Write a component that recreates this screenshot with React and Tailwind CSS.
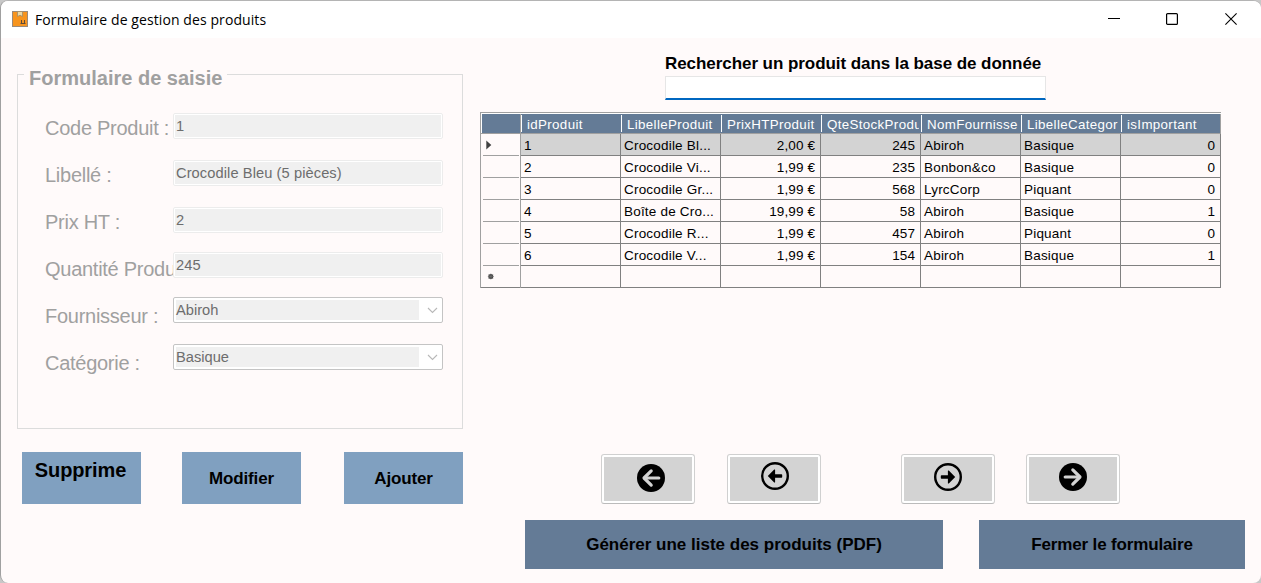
const fields = [
  { value: "1", gap: "mt-0" },
  { value: "Crocodile Bleu (5 pièces)", gap: "mt-[21px]" },
  { value: "2", gap: "mt-[21px]" },
  { value: "245", gap: "mt-[19px]" },
];

const labels = [
  "Code Produit :",
  "Libellé :",
  "Prix HT :",
  "Quantité Produ",
  "Fournisseur :",
  "Catégorie :",
];

const columns = [
  "idProduit",
  "LibelleProduit",
  "PrixHTProduit",
  "QteStockProdu",
  "NomFournisse",
  "LibelleCategor",
  "isImportant",
];

const rows = [
  ["1", "Crocodile Bl...", "2,00 €", "245", "Abiroh", "Basique", "0"],
  ["2", "Crocodile Vi...", "1,99 €", "235", "Bonbon&co", "Basique", "0"],
  ["3", "Crocodile Gr...", "1,99 €", "568", "LyrcCorp", "Piquant", "0"],
  ["4", "Boîte de Cro...", "19,99 €", "58", "Abiroh", "Basique", "1"],
  ["5", "Crocodile R...", "1,99 €", "457", "Abiroh", "Piquant", "0"],
  ["6", "Crocodile V...", "1,99 €", "154", "Abiroh", "Basique", "1"],
  ["", "", "", "", "", "", ""],
];

const rightAligned = [2, 3, 6];

function TitleBar() {
  return (
    <header className="flex h-[37px] shrink-0 items-center bg-white pl-[11px]">
      <svg width="16" height="16" viewBox="0 0 16 16" className="-mt-[1px] shrink-0">
        <rect x="0.5" y="0.5" width="15" height="15" fill="#f7941d" stroke="#9a8a7a" />
        <path d="M5.5 0.5h5v5l-2.5-1.2-2.5 1.2z" fill="#ecd9a5" stroke="#a08a68" strokeWidth="0.8" />
        <path d="M9.5 9v3M12.5 9v3M8.5 12.5h5" stroke="#5d4a38" fill="none" />
      </svg>
      <h1 className="ml-[7px] flex-1 whitespace-nowrap font-['Open_Sans',sans-serif] text-[14px] tracking-[0.09px] text-black">
        Formulaire de gestion des produits
      </h1>
      <div className="mr-[24px] flex items-center pb-px">
        <svg width="12" height="12" viewBox="0 0 12 12">
          <path d="M0 5.5h12" stroke="#000" />
        </svg>
        <svg width="12" height="12" viewBox="0 0 12 12" className="ml-[46px]">
          <rect x="0.6" y="0.6" width="10.8" height="10.8" rx="1" fill="none" stroke="#000" strokeWidth="1.2" />
        </svg>
        <svg width="12" height="12" viewBox="0 0 12 12" className="ml-[47px]">
          <path d="M0.4 0.4l11.2 11.2M11.6 0.4L0.4 11.6" stroke="#000" strokeWidth="1.1" />
        </svg>
      </div>
    </header>
  );
}

function Select({ value }) {
  return (
    <div className="flex h-[26px] w-[270px] items-center rounded-[2px] border border-[#c4c4c4] bg-white pl-[2px]">
      <span className="h-5 w-[243px] bg-[#f0f0f0] text-[14.67px] leading-[20px] text-[#6d6d6d]">{value}</span>
      <svg width="11" height="7" viewBox="0 0 11 7" className="ml-2">
        <path d="M1 1l4.5 4.5L10 1" fill="none" stroke="#b8b8b8" strokeWidth="1.1" />
      </svg>
    </div>
  );
}

function EntryForm() {
  return (
    <div className="flex h-[366px] w-[446px] flex-col">
      <div className="flex h-[23px] items-center">
        <span className="-mt-px h-px w-[7px] bg-[#dcdcdc]" />
        <h2 className="w-[203px] whitespace-nowrap pl-[5px] pt-[8px] text-[20px] font-bold leading-[23px] text-[#a0a0a0]">
          Formulaire de saisie
        </h2>
        <span className="-mt-px h-px flex-1 bg-[#dcdcdc]" />
      </div>
      <div className="-mt-[12px] flex flex-1 border-x border-b border-[#dcdcdc] pl-[27px]">
        <div className="mt-[31px] w-[128px] shrink-0 overflow-hidden whitespace-nowrap text-[20px] tracking-[-0.27px] text-[#a0a0a0]">
          {labels.map((l) => (
            <div key={l} className="h-[47px] leading-[47px]">{l}</div>
          ))}
        </div>
        <div className="flex flex-col pt-[39px]">
          {fields.map((f) => (
            <div key={f.value} className={`h-[26px] w-[270px] rounded-[2px] border border-[#ececec] bg-white p-px ${f.gap}`}>
              <div className="h-[22px] bg-[#f0f0f0] pl-[1px] text-[14.67px] leading-[22px] tracking-[0.08px] text-[#6d6d6d]">{f.value}</div>
            </div>
          ))}
          <div className="mt-[19px]"><Select value="Abiroh" /></div>
          <div className="mt-[21px]"><Select value="Basique" /></div>
        </div>
      </div>
    </div>
  );
}

function ProductTable() {
  return (
    <div className="w-[741px] border-l border-t border-[#a0a0a0] text-[13.5px] tracking-[0.2px]">
      <div className="flex h-[21px] border-b border-b-[#a0a0a0] border-t border-t-white bg-[#647b96] text-white">
        <div className="w-[40px] shrink-0 border-l border-r border-l-white border-r-[#a0a0a0]" />
        {columns.map((c, i) => (
          <div key={c} className={`flex w-[100px] items-center ${i === 6 ? "border-r border-[#a0a0a0]" : ""}`}>
            <span className="h-[17px] w-px shrink-0 bg-white" />
            <span className="ml-[5px] w-[92px] overflow-hidden whitespace-nowrap pt-[2px] text-[13.33px] leading-[21px] tracking-[0.35px]">{c}</span>
          </div>
        ))}
      </div>
      {rows.map((r, i) => (
        <div key={i} className="flex h-[22px]">
          <div className={`flex w-[40px] shrink-0 border-r border-[#a0a0a0] ${i === 6 ? "" : "pl-[2px] pr-px"}`}>
            <div className={`flex flex-1 items-center border-b ${i === 6 ? "border-[#808080] pl-[5px]" : "border-[#a0a0a0] pl-[3px]"}`}>
              {i === 0 && (
                <svg width="6" height="10" viewBox="0 0 6 10"><path d="M0.3 0.5L5.3 5 0.3 9.5z" fill="#404040" /></svg>
              )}
              {i === 6 && (
                <svg width="9" height="7" viewBox="0 0 9 7"><circle cx="4.8" cy="3.5" r="2.5" fill="#404040" /><path d="M4.8 0.5v6M1.8 3.5h6M2.5 1.2l4.6 4.6M7.1 1.2L2.5 5.8" stroke="#707070" strokeWidth="0.6" /></svg>
              )}
            </div>
          </div>
          {r.map((v, j) => (
            <div
              key={j}
              className={`w-[100px] overflow-hidden whitespace-nowrap border-b border-r border-[#808080] leading-[24px] text-black ${i === 0 ? "bg-[#d3d3d3]" : ""} ${rightAligned.includes(j) ? "pr-[5px] text-right tracking-[0.1px]" : "pl-[3px]"}`}
            >
              {v}
            </div>
          ))}
        </div>
      ))}
    </div>
  );
}

function NavButton({ label, className, children }) {
  return (
    <button
      aria-label={label}
      className={`h-[50px] w-[94px] rounded-[3px] border border-[#d0d0d0] border-b-[#bbbbbb] bg-white p-[2px] ${className}`}
    >
      <span className="flex h-full w-full items-start justify-start bg-[#d3d3d3]">{children}</span>
    </button>
  );
}

function SolidArrow({ flip, className }) {
  return (
    <svg width="28" height="28" viewBox="0 0 28 28" className={className}>
      <circle cx="14" cy="14" r="14" fill="#000" />
      <g transform={flip ? "matrix(-1 0 0 1 28 0)" : undefined} fill="none" stroke="#d3d3d3" strokeLinecap="round">
        <path d="M14.2 6.9L7 14l7.2 7.1" strokeWidth="3.2" strokeLinejoin="round" />
        <path d="M8 14h13.8" strokeWidth="3.2" />
      </g>
    </svg>
  );
}

function OutlineArrow({ flip, className }) {
  return (
    <svg width="28" height="28" viewBox="0 0 28 28" className={className}>
      <circle cx="14" cy="14" r="12.8" fill="none" stroke="#000" strokeWidth="2.4" />
      <g transform={flip ? "matrix(-1 0 0 1 28 0)" : undefined}>
        <path d="M6.8 14l6.4-6.4q0.9-0.6 0.9 0.5v4.1h6.4q0.7 0 0.7 0.7v2.2q0 0.7-0.7 0.7h-6.4v4.1q0 1.1-0.9 0.5z" fill="#000" />
      </g>
    </svg>
  );
}

export default function App() {
  return (
    <div className="h-[583px] w-[1261px] overflow-hidden bg-[#c8c8c8] font-['Liberation_Sans',Arial,sans-serif]">
      <div className="flex h-full flex-col overflow-hidden rounded-[8px] border-l border-t border-[#a0a0a0] border-t-[#b4b4b4] bg-[#fffafa]">
        <TitleBar />
        <main className="flex flex-1 pl-[16px]">
          <section className="flex w-[446px] shrink-0 flex-col pt-[25px]">
            <EntryForm />
            <div className="ml-[5px] mt-[23px] flex text-[17px] font-bold tracking-[-0.15px] text-black">
              <button className="flex h-[52px] w-[119px] justify-center bg-[#80a0c0] pt-[6px] pr-[2px] text-[20px] leading-[24px] tracking-[-0.1px]">
                Supprime
              </button>
              <button className="ml-[41px] h-[52px] w-[119px] bg-[#80a0c0] pt-[2px]">Modifier</button>
              <button className="ml-[43px] h-[52px] w-[119px] bg-[#80a0c0] pt-[2px]">Ajouter</button>
            </div>
          </section>
          <section className="flex flex-1 flex-col pl-[17px] pt-[15px]">
            <div className="ml-[185px] w-[381px]">
              <label className="block h-[23px] whitespace-nowrap text-[17px] font-bold leading-[21px] tracking-[-0.06px] text-black">
                Rechercher un produit dans la base de donnée
              </label>
              <div className="h-[24px] border border-b-2 border-[#e6e6e6] border-b-[#0067c0] bg-white" />
            </div>
            <div className="mt-[12px]"><ProductTable /></div>
            <div className="ml-[121px] mt-[166px] flex">
              <NavButton label="Premier">
                <SolidArrow className="ml-[33px] mt-[7px]" />
              </NavButton>
              <NavButton label="Précédent" className="ml-[32px]">
                <OutlineArrow className="ml-[31px] mt-[5px]" />
              </NavButton>
              <NavButton label="Suivant" className="ml-[80px]">
                <OutlineArrow flip className="ml-[30px] mt-[6px]" />
              </NavButton>
              <NavButton label="Dernier" className="ml-[31px]">
                <SolidArrow flip className="ml-[30px] mt-[6px]" />
              </NavButton>
            </div>
            <div className="ml-[45px] mt-[16px] flex gap-[36px] text-[17px] font-bold text-black">
              <button className="h-[49px] w-[418px] bg-[#647b96]">Générer une liste des produits (PDF)</button>
              <button className="h-[49px] w-[266px] bg-[#647b96] tracking-[-0.15px]">Fermer le formulaire</button>
            </div>
          </section>
        </main>
      </div>
    </div>
  );
}
